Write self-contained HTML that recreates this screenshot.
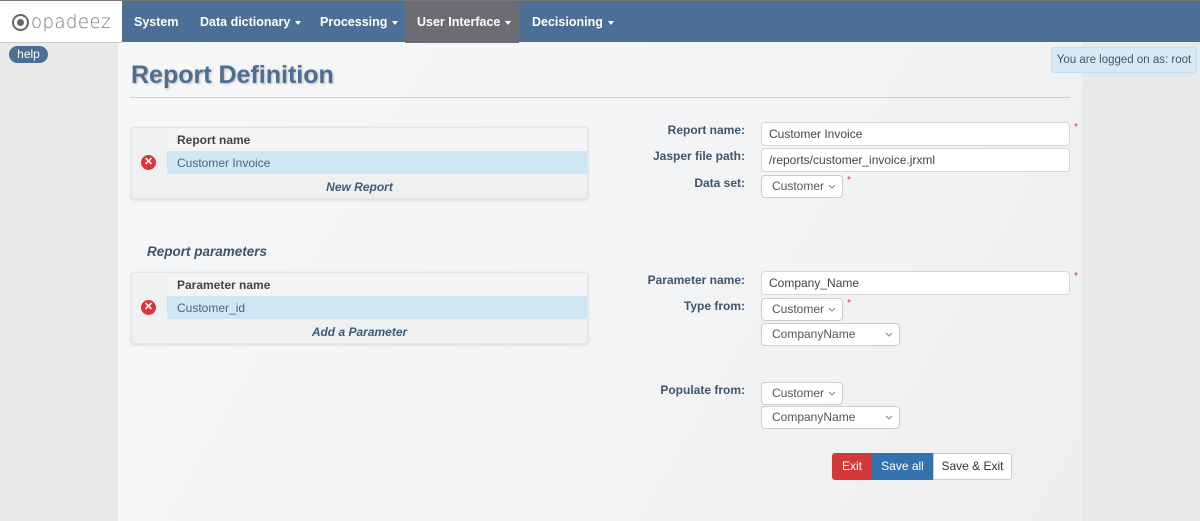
<!DOCTYPE html>
<html><head><meta charset="utf-8"><style>
*{box-sizing:border-box;margin:0;padding:0}
body{width:1200px;height:521px;overflow:hidden;font-family:"Liberation Sans",Arial,sans-serif;background:#e8e9ea;position:relative;font-size:13px;color:#333}
.nav{position:absolute;left:0;top:0;width:1200px;height:42px;background:#4c6f95;border-top:1px solid #777}
.logo{position:absolute;left:0;top:0;width:122px;height:42px;background:#fff;border-bottom:1px solid #ccc}
.logo span{position:absolute;left:31px;top:10px;font-size:19px;color:#777;letter-spacing:0.5px;font-family:"DejaVu Sans",sans-serif;font-weight:200;transform:scaleX(0.95);transform-origin:left}
.logo i{position:absolute;left:12px;top:13px;width:17px;height:17px;border:2px solid #666;border-radius:50%}
.logo i:after{content:"";position:absolute;left:3px;top:3px;width:7px;height:7px;background:#666;border-radius:50%}
.nav a{position:absolute;top:0;height:42px;line-height:42px;color:#fff;font-weight:bold;font-size:12.5px;padding:0 12px;white-space:nowrap}
.car{display:inline-block;border-left:3.5px solid transparent;border-right:3.5px solid transparent;border-top:4px solid #fff;vertical-align:middle;margin-left:5px}
.main{position:absolute;left:118px;top:42px;width:964px;height:479px;background:linear-gradient(120deg,#f6f7f8 0%,#f3f4f5 55%,#eceef0 100%)}
.help{position:absolute;left:9px;top:46px;width:39px;height:17px;background:#4c6f95;color:#fff;border-radius:9px;font-size:12px;text-align:center;line-height:17px}
h1{position:absolute;left:131px;top:61px;font-size:25px;color:#4d6e93;font-weight:bold;text-shadow:1px 1px 2px #bbb}
.hr{position:absolute;left:130px;top:97px;width:940px;height:1px;background:#c8d0da}
.logged{position:absolute;left:1051px;top:47px;width:146px;height:26px;background:#d6e9f5;border:1px solid #c7def0;border-radius:3px;color:#456;font-size:11.5px;line-height:24px;text-align:center;white-space:nowrap}
.tbl{position:absolute;left:131px;width:457px;height:72px;background:#eef0f2;border:1px solid #e2e4e6;border-radius:3px;box-shadow:0 1px 3px rgba(0,0,0,.12)}
.tbl .h{position:absolute;left:35px;top:0;right:0;height:24px;background:#f3f4f5;font-weight:bold;padding:5px 10px;font-size:12px;color:#444}
.tbl .r{position:absolute;left:35px;top:23px;right:0;height:23px;background:#cfe7f5;padding:5px 10px;font-size:12px;color:#4a6781}
.tbl .x{position:absolute;left:9px;top:27px;width:15px;height:15px;border-radius:50%;background:#d9363e;color:#fff;font-size:11px;font-weight:bold;text-align:center;line-height:15px}
.tbl .f{position:absolute;left:0;right:0;top:52px;text-align:center;font-weight:bold;font-style:italic;color:#3f5a78;font-size:12px}
.lbl{position:absolute;width:200px;text-align:right;font-weight:bold;font-size:12px;color:#3f556d}
.in{position:absolute;height:24px;background:#fff;border:1px solid #d5d7da;border-radius:4px;padding:0 7px;line-height:22px;font-size:12px;color:#444}
.sel{position:absolute;height:23px;background:#fff;border:1px solid #ccc;border-radius:4px;padding:0 10px;line-height:21px;font-size:12px;color:#555}
.sel svg{position:absolute;right:6px;top:8px}
.st{position:absolute;color:#d33;font-size:10px}
.btn{position:absolute;top:453px;height:27px;line-height:27px;font-size:12px;text-align:center}
</style></head><body>
<div class="main"></div>
<div class="nav">
<div class="logo"><i></i><span>opadeez</span></div>
<a style="left:122px">System</a>
<a style="left:188px">Data dictionary<span class="car"></span></a>
<a style="left:308px">Processing<span class="car"></span></a>
<a style="left:405px;width:114px;background:#6b6d70">User Interface<span class="car"></span></a>
<a style="left:520px">Decisioning<span class="car"></span></a>
</div>
<div class="help">help</div>
<h1>Report Definition</h1>
<div class="hr"></div>
<div class="logged">You are logged on as: root</div>

<div class="tbl" style="top:127px"><div class="h">Report name</div><div class="r">Customer Invoice</div><div class="x">✕</div><div class="f">New Report</div></div>
<div style="position:absolute;left:147px;top:244px;font-weight:bold;font-style:italic;font-size:13.5px;color:#3f556d">Report parameters</div>
<div class="tbl" style="top:272px"><div class="h">Parameter name</div><div class="r">Customer_id</div><div class="x">✕</div><div class="f">Add a Parameter</div></div>

<div class="lbl" style="left:545px;top:123px">Report name:</div>
<div class="in" style="left:761px;top:122px;width:309px">Customer Invoice</div><div class="st" style="left:1074px;top:122px">*</div>
<div class="lbl" style="left:545px;top:149px">Jasper file path:</div>
<div class="in" style="left:761px;top:148px;width:309px">/reports/customer_invoice.jrxml</div>
<div class="lbl" style="left:545px;top:176px">Data set:</div>
<div class="sel" style="left:761px;top:175px;width:82px">Customer<svg width="8" height="5"><path d="M1 1L4 4L7 1" stroke="#888" fill="none"/></svg></div><div class="st" style="left:847px;top:175px">*</div>

<div class="lbl" style="left:545px;top:273px">Parameter name:</div>
<div class="in" style="left:761px;top:271px;width:309px">Company_Name</div><div class="st" style="left:1074px;top:271px">*</div>
<div class="lbl" style="left:545px;top:299px">Type from:</div>
<div class="sel" style="left:761px;top:298px;width:82px">Customer<svg width="8" height="5"><path d="M1 1L4 4L7 1" stroke="#888" fill="none"/></svg></div><div class="st" style="left:847px;top:298px">*</div>
<div class="sel" style="left:761px;top:323px;width:139px">CompanyName<svg width="8" height="5"><path d="M1 1L4 4L7 1" stroke="#888" fill="none"/></svg></div>
<div class="lbl" style="left:545px;top:383px">Populate from:</div>
<div class="sel" style="left:761px;top:382px;width:82px">Customer<svg width="8" height="5"><path d="M1 1L4 4L7 1" stroke="#888" fill="none"/></svg></div>
<div class="sel" style="left:761px;top:406px;width:139px">CompanyName<svg width="8" height="5"><path d="M1 1L4 4L7 1" stroke="#888" fill="none"/></svg></div>

<div class="btn" style="left:832px;width:40px;background:#d2393a;color:#fff;border-radius:3px 0 0 3px">Exit</div>
<div class="btn" style="left:872px;width:61px;background:#3471ad;color:#fff">Save all</div>
<div class="btn" style="left:933px;width:79px;background:#fff;color:#333;border:1px solid #ccc;border-radius:0 3px 3px 0;line-height:25px">Save &amp; Exit</div>
</body></html>
